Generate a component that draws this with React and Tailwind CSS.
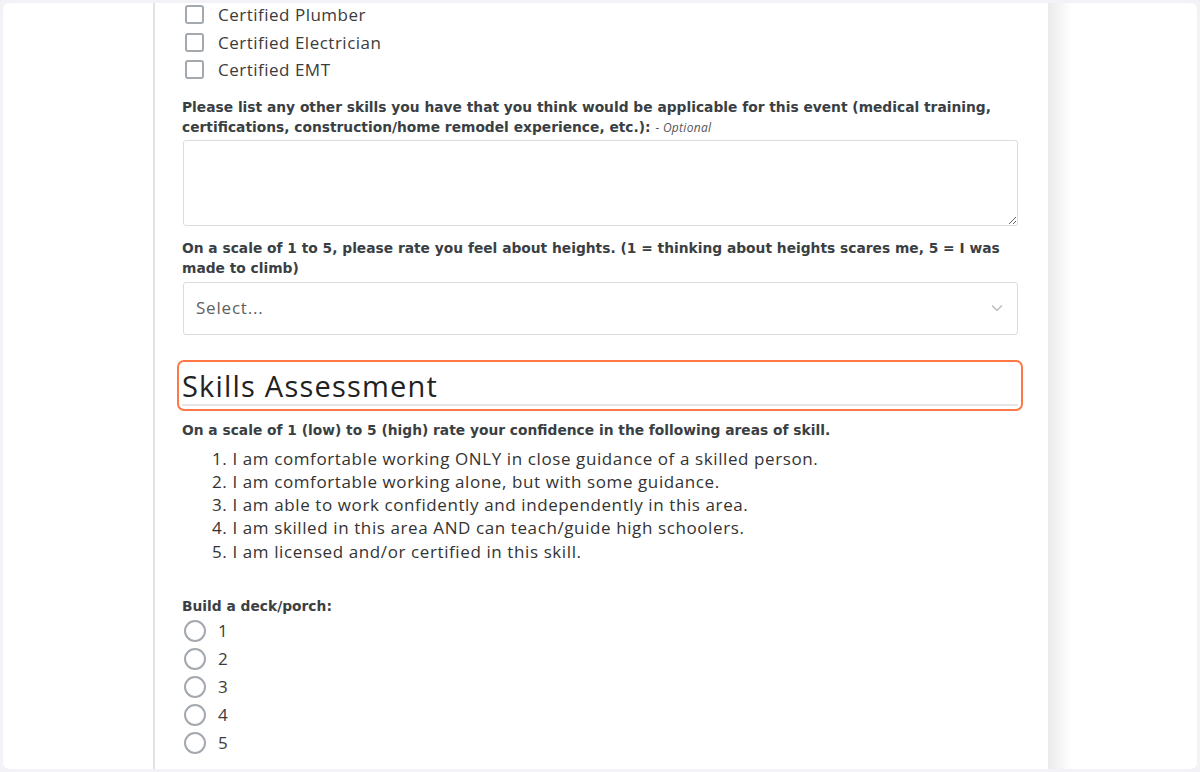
import React from 'react';

const body = { fontFamily: '"Open Sans", "Liberation Sans", sans-serif' };
const bold = { fontFamily: '"DejaVu Sans", "Liberation Sans", sans-serif' };

function Checkbox({ label }) {
  return (
    <div className="flex items-center h-[27.5px]">
      <span className="w-[19px] h-[19px] border-2 border-[#a3a9ae] rounded-[3px] ml-[3px] bg-white" />
      <span className="ml-[14px] text-[17px] tracking-[0.5px] text-[#3b3b3b]">{label}</span>
    </div>
  );
}

function Radio({ label }) {
  return (
    <div className="flex items-center h-[28px]">
      <span className="w-[22px] h-[22px] border-2 border-[#a3a9ae] rounded-full ml-[2px] bg-white" />
      <span className="ml-[12px] text-[17px] text-[#3b3b3b]">{label}</span>
    </div>
  );
}

function Label({ children }) {
  return (
    <div style={bold} className="text-[13.8px] font-bold leading-[20px] text-[#3a3f44]">
      {children}
    </div>
  );
}

export default function App() {
  const scale = [
    'I am comfortable working ONLY in close guidance of a skilled person.',
    'I am comfortable working alone, but with some guidance.',
    'I am able to work confidently and independently in this area.',
    'I am skilled in this area AND can teach/guide high schoolers.',
    'I am licensed and/or certified in this skill.',
  ];

  return (
    <div className="w-[1200px] h-[772px] bg-[#f2f2f7] p-[3px]" style={body}>
      <div className="h-[766px] bg-white rounded-md overflow-hidden flex">
        <div className="w-[150px] shrink-0" />
        <div className="w-[895px] shrink-0 border-l-2 border-[#e3e3e3] pl-[27px] pr-[29px] flex flex-col">
          <div className="-mt-[2px]">
            <Checkbox label="Certified Plumber" />
            <Checkbox label="Certified Electrician" />
            <Checkbox label="Certified EMT" />
          </div>

          <div className="mt-[13px]">
            <Label>
              Please list any other skills you have that you think would be applicable for this event (medical training,
              certifications, construction/home remodel experience, etc.):{' '}
              <span style={body} className="italic font-normal text-[12px] leading-none tracking-[0.3px] text-[#555]">
                - Optional
              </span>
            </Label>
          </div>
          <textarea className="mt-[3px] ml-[1px] h-[86px] w-[835px] border border-[#dcdcdc] rounded-[3px] resize-y" />

          <div className="mt-[12px]">
            <Label>
              On a scale of 1 to 5, please rate you feel about heights. (1 = thinking about heights scares me, 5 = I was
              made to climb)
            </Label>
          </div>
          <div className="mt-[4px] ml-[1px] h-[53px] w-[835px] border border-[#dcdcdc] rounded-[3px] flex items-center justify-between px-[12px]">
            <span className="text-[17px] tracking-[0.8px] text-[#5f5f5f]">Select...</span>
            <svg width="12" height="8" viewBox="0 0 12 8" className="mr-[2px]">
              <path d="M1 1.5 L6 6.5 L11 1.5" fill="none" stroke="#b5b5b5" strokeWidth="1.2" />
            </svg>
          </div>

          <div className="mt-[25px] -ml-[5px] w-[846px] h-[51px] border-2 border-[#ff7845] rounded-[7px] px-[3px] pt-[2px]">
            <div className="h-[42px] border-b-2 border-[#e6e6e6] flex items-center">
              <span className="text-[29px] leading-none text-[#222] tracking-[1.2px] pt-[3px]">Skills Assessment</span>
            </div>
          </div>

          <div className="mt-[9px]">
            <Label>On a scale of 1 (low) to 5 (high) rate your confidence in the following areas of skill.</Label>
          </div>
          <ol className="mt-[7px] ml-[30px] text-[17px] tracking-[0.6px] leading-[23.3px] text-[#333]">
            {scale.map((s, i) => (
              <li key={i}>
                {i + 1}. {s}
              </li>
            ))}
          </ol>

          <div className="mt-[33px]">
            <Label>Build a deck/porch:</Label>
          </div>
          <div className="mt-[1px]">
            {['1', '2', '3', '4', '5'].map((n) => (
              <Radio key={n} label={n} />
            ))}
          </div>
        </div>
        <div className="w-[24px] shrink-0 bg-gradient-to-r from-[#ebebeb] to-white" />
        <div className="flex-1" />
      </div>
    </div>
  );
}
